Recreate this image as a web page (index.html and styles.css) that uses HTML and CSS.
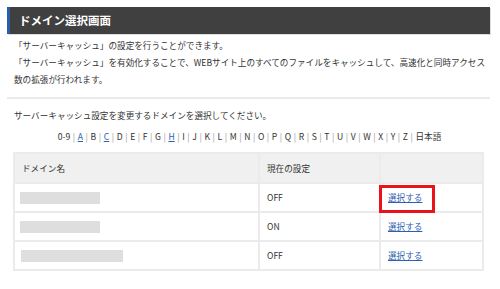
FILE: index.html
```html
<!DOCTYPE html>
<html lang="ja">

<head>
  <meta charset="UTF-8">
  <meta name="viewport" content="width=device-width, initial-scale=1.0">
  <title>ドメイン選択画面</title>
  <link rel="stylesheet" href="styles.css">
</head>

<body>
  <div id="container">
    <h1 class="pageTitle">ドメイン選択画面</h1>

    <div class="intro">
      <p>「サーバーキャッシュ」の設定を行うことができます。<br>
        「サーバーキャッシュ」を有効化することで、WEBサイト上のすべてのファイルをキャッシュして、高速化と同時アクセス数の拡張が行われます。</p>
    </div>

    <div class="domainSelect">
      <p class="lead">サーバーキャッシュ設定を変更するドメインを選択してください。</p>

      <!-- alphabet index -->
      <p class="indexNav">
        <span>0-9</span><i>|</i><a href="#">A</a><i>|</i><span>B</span><i>|</i><a href="#">C</a><i>|</i><span>D</span><i>|</i><span>E</span><i>|</i><span>F</span><i>|</i><span>G</span><i>|</i><a href="#">H</a><i>|</i><span>I</span><i>|</i><span>J</span><i>|</i><span>K</span><i>|</i><span>L</span><i>|</i><span>M</span><i>|</i><span>N</span><i>|</i><span>O</span><i>|</i><span>P</span><i>|</i><span>Q</span><i>|</i><span>R</span><i>|</i><span>S</span><i>|</i><span>T</span><i>|</i><span>U</span><i>|</i><span>V</span><i>|</i><span>W</span><i>|</i><span>X</span><i>|</i><span>Y</span><i>|</i><span>Z</span><i>|</i><span>日本語</span>
      </p>

      <table class="domainTable">
        <colgroup>
          <col class="colName">
          <col class="colState">
          <col class="colAction">
        </colgroup>
        <thead>
          <tr>
            <th>ドメイン名</th>
            <th>現在の設定</th>
            <th></th>
          </tr>
        </thead>
        <tbody>
          <tr>
            <td><span class="masked"></span></td>
            <td>OFF</td>
            <td class="action"><a href="#">選択する</a><span class="callout"></span></td>
          </tr>
          <tr>
            <td><span class="masked"></span></td>
            <td>ON</td>
            <td class="action"><a href="#">選択する</a></td>
          </tr>
          <tr>
            <td><span class="masked wide"></span></td>
            <td>OFF</td>
            <td class="action"><a href="#">選択する</a></td>
          </tr>
        </tbody>
      </table>
    </div>
  </div>
</body>

</html>
```

FILE: styles.css
```css
body {
  margin: 0;
  padding: 7px 10px 7px 7px;
  background-color: #fff;
  color: #333;
  font-family: "Noto Sans CJK JP", "Noto Sans", sans-serif;
  font-size: 8.6px;
}

p {
  margin: 0;
}

a {
  color: #2d5fae;
  text-decoration: underline;
}

.pageTitle {
  margin: 0;
  height: 27px;
  line-height: 27px;
  padding-left: 9px;
  background-color: #404040;
  border-left: 3px solid #2b5ea8;
  box-shadow: 1px 1px 0 #dcdcdc;
  color: #fff;
  font-size: 11.5px;
  font-weight: bold;
}

.intro {
  padding: 3px 0 9px 7px;
  line-height: 17px;
  border-bottom: 2px solid #ebebeb;
}

.domainSelect {
  padding: 8px 4px 0 6px;
  line-height: 17px;
}

.lead {
  padding-left: 1px;
}

.indexNav {
  margin-top: 4px;
  text-align: center;
}

.indexNav i {
  font-style: normal;
  color: #999;
  margin: 0 2.6px;
}

.domainTable {
  margin-top: 7px;
  width: 469px;
  border-collapse: collapse;
  table-layout: fixed;
}

.colName {
  width: 245px;
}

.colState {
  width: 121px;
}

.colAction {
  width: 103px;
}

.domainTable th,
.domainTable td {
  height: 27px;
  padding: 0 7px;
  border: 2px solid #ebebeb;
  text-align: left;
  font-weight: normal;
}

.domainTable th {
  height: 28px;
  background-color: #f0f0f0;
}

.masked {
  display: block;
  width: 80px;
  height: 12px;
  margin-left: -2px;
  background-color: #dedede;
}

.masked.wide {
  width: 102px;
  margin-left: -1px;
}

.action {
  position: relative;
}

/* red highlight around the first link */
.callout {
  position: absolute;
  left: -2px;
  top: 1px;
  width: 50px;
  height: 22px;
  border: 3px solid #e8131b;
}
```
